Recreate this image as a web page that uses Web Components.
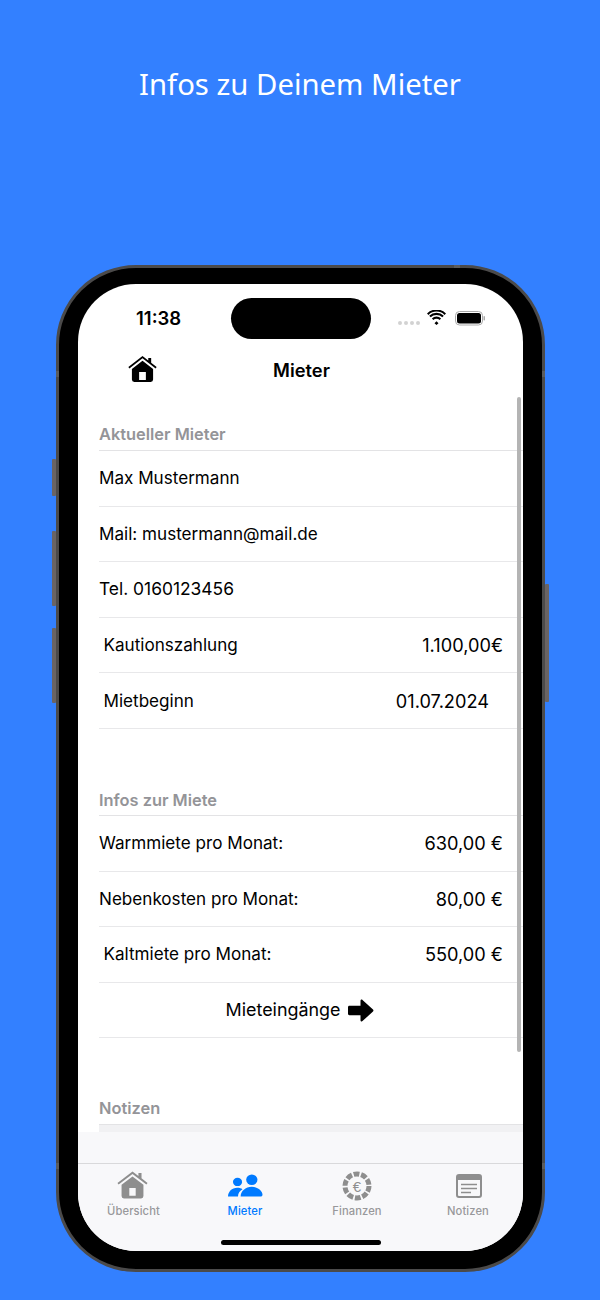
<!DOCTYPE html>
<html lang="de"><head><meta charset="utf-8"><title>Mieter</title>
<style>html,body{margin:0;padding:0;background:#3380ff}body{width:600px;height:1300px;overflow:hidden}</style>
</head><body>
<promo-page>
  <span slot="title">Infos zu Deinem Mieter</span>
  <phone-frame>
    <status-bar></status-bar>
    <nav-bar>Mieter</nav-bar>
    <tenant-list>
      <list-section heading="Aktueller Mieter">
        <list-row>Max Mustermann</list-row>
        <list-row>Mail: mustermann@mail.de</list-row>
        <list-row style="font-size:17.400px">Tel. 0160123456</list-row>
        <list-row indent value="1.100,00€">Kautionszahlung</list-row>
        <list-row indent value="01.07.2024" inset>Mietbeginn</list-row>
      </list-section>
      <list-section heading="Infos zur Miete" drop>
        <list-row value="630,00 €">Warmmiete pro Monat:</list-row>
        <list-row value="80,00 €">Nebenkosten pro Monat:</list-row>
        <list-row indent value="550,00 €">Kaltmiete pro Monat:</list-row>
        <list-row center>Mieteingänge <svg slot="after" width="27" height="23" viewBox="0 0 27 23"><path fill="#000" d="M1 8.200c0-.8.6-1.400 1.400-1.400H13.500V1.800c0-1.100 1.200-1.600 2-.9L26 10.500c.6.6.6 1.400 0 2L15.500 22.100c-.8.7-2 .2-2-.9v-5H2.400c-.8 0-1.400-.6-1.400-1.400z"/></svg></list-row>
      </list-section>
      <list-section heading="Notizen" last></list-section>
    </tenant-list>
    <tab-bar>
      <tab-item label="Übersicht"><svg width="31" height="27.500" viewBox="0 0 34 30" style="margin-top:-2px;margin-left:-2px"><path fill="#8e8e8e" fill-rule="evenodd" d="M17 .5l6.500 4.900V2.200h3.400v5.800L33.500 13l-1.300 1.700L17 3.300 1.800 14.700.5 13zM17 6L29 15v12.400a2.600 2.600 0 0 1-2.600 2.600H7.600A2.600 2.600 0 0 1 5 27.400V15zM13.500 18.500V27h7v-8.500z"/></svg></tab-item>
      <tab-item label="Mieter" active><svg width="35" height="23" viewBox="0 0 36 26" preserveAspectRatio="none" style="margin-top:-2px"><circle cx="9.800" cy="9" r="4.700" fill="#007aff"/><circle cx="24.500" cy="6.500" r="5.800" fill="#007aff"/><path fill="#007aff" d="M0 25.500c0-5.500 4-10 9.500-10 2.400 0 4 .6 5.400 1.700C12 19 10.300 22 10.300 25.500zM13 25.500c0-6 5-11 11.500-11S35.500 19.500 35.500 23.500c0 1.300-.9 2-2 2z"/></svg></tab-item>
      <tab-item label="Finanzen"><euro-coin></euro-coin></tab-item>
      <tab-item label="Notizen"><svg width="26" height="24" viewBox="0 0 26 24" style="margin-left:2px"><rect x="1" y="1" width="24" height="22" rx="2" fill="none" stroke="#8e8e8e" stroke-width="2"/><path fill="#8e8e8e" d="M1 3a2 2 0 0 1 2-2h20a2 2 0 0 1 2 2v3H1z"/><path stroke="#8e8e8e" stroke-width="1.600" d="M5 10.500h16M5 14.500h16M5 18.500h10"/></svg></tab-item>
    </tab-bar>
  </phone-frame>
</promo-page>
<script>
function def(name, html, init){
  customElements.define(name, class extends HTMLElement{
    constructor(){super();this.attachShadow({mode:'open'}).innerHTML=html;}
    connectedCallback(){ if(init) init(this,this.shadowRoot); }
  });
}
const SF='Inter,"Liberation Sans",sans-serif';
def('promo-page',`<style>
:host{display:block;width:600px;height:1300px;background:#3380ff;font-family:${SF}}
h1{margin:0;height:265px;padding-top:62px;box-sizing:border-box;text-align:center;font:400 29.300px/44px "Noto Sans",sans-serif;color:#fff}
.wrap{padding-left:56px}
</style><h1><slot name="title"></slot></h1><div class="wrap"><slot></slot></div>`);

def('phone-frame',`<style>
:host{display:block;position:relative;width:489px;height:1007px;box-sizing:border-box;background:#000;border-radius:80px;border:3px solid #4b4a4a;padding:16px 19px 18px}
.screen{position:relative;width:445px;height:967px;background:#fff;border-radius:58px;overflow:hidden;display:flex;flex-direction:column}
.island{position:absolute;left:153px;top:14px;width:140px;height:41px;border-radius:21px;background:#000;z-index:3}
.scroll{position:absolute;left:439px;top:113px;width:3.500px;height:655px;border-radius:2px;background:#b4b4b4;z-index:2}
.btn{position:absolute;background:#6a6464;width:4px;border-radius:1px}
.band{position:absolute;background:#5c5c5c}
.band.h{width:3px;height:6px;left:-3px}.band.r{left:auto;right:-3px}
.band.v{width:6px;height:3px;top:-3px}
</style>
<span class="btn" style="left:-7px;top:191px;height:37px"></span>
<span class="btn" style="left:-7px;top:263px;height:75px"></span>
<span class="btn" style="left:-7px;top:360px;height:75px"></span>
<span class="btn" style="right:-7px;top:316px;height:118px"></span>
<span class="band h" style="top:103px"></span><span class="band h r" style="top:103px"></span>
<span class="band h" style="top:895px"></span><span class="band h r" style="top:895px"></span>
<span class="band v" style="left:395px"></span>
<div class="screen"><div class="island"></div><div class="scroll"></div><slot></slot></div>`);

def('status-bar',`<style>
:host{display:flex;align-items:center;height:62px;flex:none;box-sizing:border-box;padding:6px 38px 0 58px;font:600 18.500px/24px ${SF};color:#000}
.t{flex:1}.dots{display:flex;gap:2px;margin-right:9px;margin-top:9px}.dots i{width:4px;height:4px;border-radius:50%;background:#d2d2d2}
svg{display:block}
</style><span class="t">11:38</span><span class="dots" style="position:relative;left:2px"><i></i><i></i><i></i><i></i></span>
<svg width="19" height="15" viewBox="0 0 19 15" style="margin-right:9px;margin-top:-1px"><path fill="#000" d="M9.500 11.200l2 2-2 1.800-2-1.800zM4.900 8.500a6.500 6.500 0 0 1 9.200 0l-1.500 1.500a4.400 4.400 0 0 0-6.200 0zM2.200 5.800a10.300 10.300 0 0 1 14.600 0l-1.500 1.500a8.200 8.200 0 0 0-11.600 0zM0 3.400a13.500 13.500 0 0 1 19 0l-1.500 1.500a11.400 11.400 0 0 0-16 0z"/></svg>
<svg width="30" height="15" viewBox="0 0 30 15"><rect x=".5" y=".5" width="27" height="13.500" rx="4" fill="none" stroke="#aaa"/><rect x="2" y="2" width="24" height="10.500" rx="2.500" fill="#000"/><rect x="28.500" y="5" width="1.500" height="4.500" rx=".7" fill="#aaa"/></svg>`);

def('nav-bar',`<style>
:host{display:flex;flex:none;height:50px;position:relative;align-items:center;justify-content:center;font:600 18.300px/24px ${SF};color:#000;padding:0 0 3px 2px;box-sizing:border-box}
svg{position:absolute;left:50px;top:10px}
</style><svg width="29" height="26" viewBox="0 0 30 27"><path fill="#000" fill-rule="evenodd" d="M15 0l6 4.700V2h3v5l5.700 4.500-1.100 1.500L15 2.400 1.400 13 .3 11.500zM15 5L26 13.500v11A2.500 2.500 0 0 1 23.500 27h-17A2.500 2.500 0 0 1 4 24.500v-11zM11.500 16.500V25h7v-8.500z"/></svg><slot></slot>`);

def('tenant-list',`<style>
:host{display:block;flex:1;min-height:0;overflow:hidden;padding:26px 0 0 21px;position:relative}
</style><slot></slot>`);

def('list-section',`<style>
:host{display:block;margin-bottom:58px}
:host([last]){margin-bottom:0}
h2{margin:0;height:29px;font:600 16.400px/22px ${SF};color:#949498;box-sizing:border-box;padding-top:.5px;border-bottom:1px solid #e3e3e5}
:host([drop]) h2{padding-top:2px}
:host([last]) h2{padding-top:1px;height:28.500px}
.fill{display:none;height:7px;background:#f1f1f3}
:host([last]) .fill{display:block}
</style><h2></h2><slot></slot><div class="fill"></div>`,(el,r)=>{r.querySelector('h2').textContent=el.getAttribute('heading');});

def('list-row',`<style>
:host{display:flex;align-items:center;height:55.600px;box-sizing:border-box;border-bottom:1px solid #e8e8ea;font:400 17.100px/24px ${SF};color:#000;padding-right:20px}
:host([indent]){padding-left:4.500px}
:host([inset]){padding-right:34px}
:host([center]){justify-content:center;padding-right:22px;padding-left:0;font-size:17.900px}
.l{flex:1}:host([center]) .l{flex:none;margin-right:7px}
.after{display:flex}
.v{white-space:pre;font-size:18.200px}
</style><span class="l"><slot></slot></span><span class="v"></span><span class="after"><slot name="after"></slot></span>`,(el,r)=>{r.querySelector('.v').textContent=el.getAttribute('value')||'';});

def('tab-bar',`<style>
:host{display:block;flex:none;height:119px;background:#f8f8fa;box-sizing:border-box;padding-top:31px;position:relative}
.row{display:grid;grid-template-columns:111px 112px 112px 110px;border-top:1px solid #d9d9db;padding-top:7px}
.home{position:absolute;left:143px;bottom:6px;width:160px;height:5px;border-radius:3px;background:#000}
</style><div class="row"><slot></slot></div><div class="home"></div>`);

def('tab-item',`<style>
:host{display:flex;flex-direction:column;align-items:center;font:500 11.200px/14px ${SF};color:#98989b;letter-spacing:.1px}
:host([active]){color:#007aff}
.i{height:30px;display:flex;align-items:center;justify-content:center}
.lb{margin-top:2.500px}
::slotted(svg){display:block}
</style><div class="i"><slot></slot></div><div class="lb"></div>`,(el,r)=>{r.querySelector('.lb').textContent=el.getAttribute('label');});

def('euro-coin',`<style>
:host{display:block;position:relative;width:30px;height:30px}
svg{position:absolute;inset:0}
span{position:absolute;inset:0;display:flex;align-items:center;justify-content:center;font:400 15px/1 "Liberation Sans",sans-serif;color:#8e8e8e}
</style><svg width="30" height="30" viewBox="0 0 30 30"><circle cx="15" cy="15" r="12" fill="none" stroke="#8e8e8e" stroke-width="5" stroke-dasharray="5.800 1.740"/></svg><span>€</span>`);
</script>
</body></html>
